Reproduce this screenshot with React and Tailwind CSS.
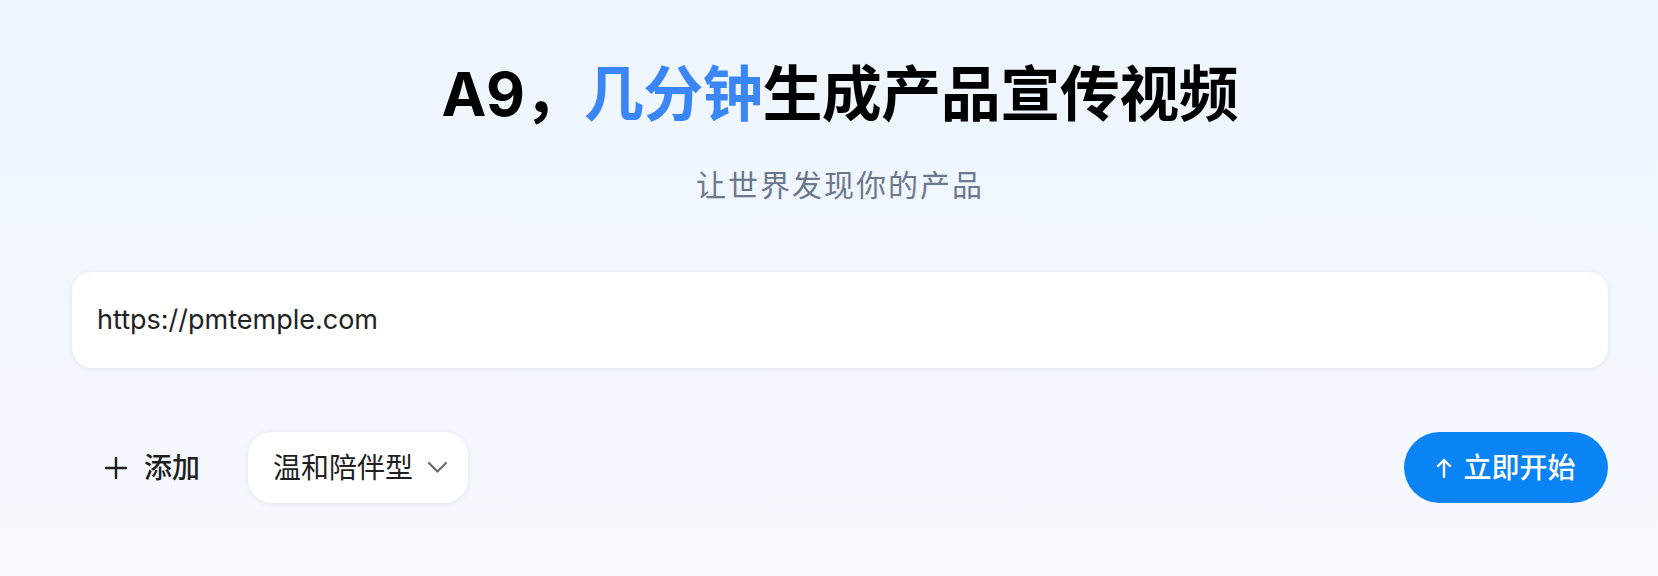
import { useState } from 'react';

const ChevronDown = () => (
  <svg width="21" height="13" viewBox="0 0 21 13" fill="none" stroke="#6b6b6b" strokeWidth="2.2" strokeLinecap="round" strokeLinejoin="round">
    <path d="M2 2l8.5 8.5L19 2" />
  </svg>
);

const ArrowUp = () => (
  <svg width="16" height="20" viewBox="0 0 16 20" fill="none" stroke="white" strokeWidth="2.4" strokeLinecap="round" strokeLinejoin="round">
    <path d="M8 19V2M2 8l6-6 6 6" />
  </svg>
);

const PlusIcon = () => (
  <svg width="22" height="22" viewBox="0 0 22 22" fill="none" stroke="#1f1f1f" strokeWidth="2.4" strokeLinecap="round">
    <path d="M11 1v20M1 11h20" />
  </svg>
);

function App() {
  const [url, setUrl] = useState('https://pmtemple.com');

  return (
    <div className="min-h-screen w-full bg-gradient-to-b from-[#eef5fd] to-[#f6f9fe] font-['Inter','Noto_Sans_CJK_SC',sans-serif]">
      <div className="flex flex-col pl-[72px] pr-[50px] pt-[64px]">
        <h1 className="text-center text-[60px] leading-none font-bold text-black tracking-[-0.5px]">
          A9，<span className="text-[#3a86f7]">几分钟</span>生成产品宣传视频
        </h1>
        <p className="mt-[46px] text-center text-[30px] leading-none text-[#6b788d] tracking-[2px]">
          让世界发现你的产品
        </p>

        <div className="mt-[72px] flex h-[96px] items-center rounded-[20px] bg-white px-[25px] shadow-[0_1px_5px_rgba(15,23,42,0.08)]">
          <input
            type="text"
            value={url}
            onChange={e => setUrl(e.target.value)}
            className="w-full bg-transparent text-[27px] text-[#222] outline-none"
          />
        </div>

        <div className="mt-[64px] flex items-center justify-between">
          <div className="flex items-center">
            <button className="ml-[33px] flex items-center gap-[17px] text-[28px] font-medium text-[#1f1f1f]">
              <PlusIcon />
              <span>添加</span>
            </button>
            <button className="ml-[48px] flex h-[71px] w-[220px] items-center gap-[14px] rounded-[24px] bg-white pl-[25px] text-[28px] text-[#1f1f1f] shadow-[0_1px_6px_rgba(15,23,42,0.08)]">
              <span>温和陪伴型</span>
              <ChevronDown />
            </button>
          </div>
          <button className="flex h-[71px] w-[204px] items-center justify-center gap-[11px] rounded-full bg-[#0a84f5] text-[28px] font-medium text-white">
            <ArrowUp />
            <span>立即开始</span>
          </button>
        </div>
      </div>
    </div>
  );
}

export default App;
